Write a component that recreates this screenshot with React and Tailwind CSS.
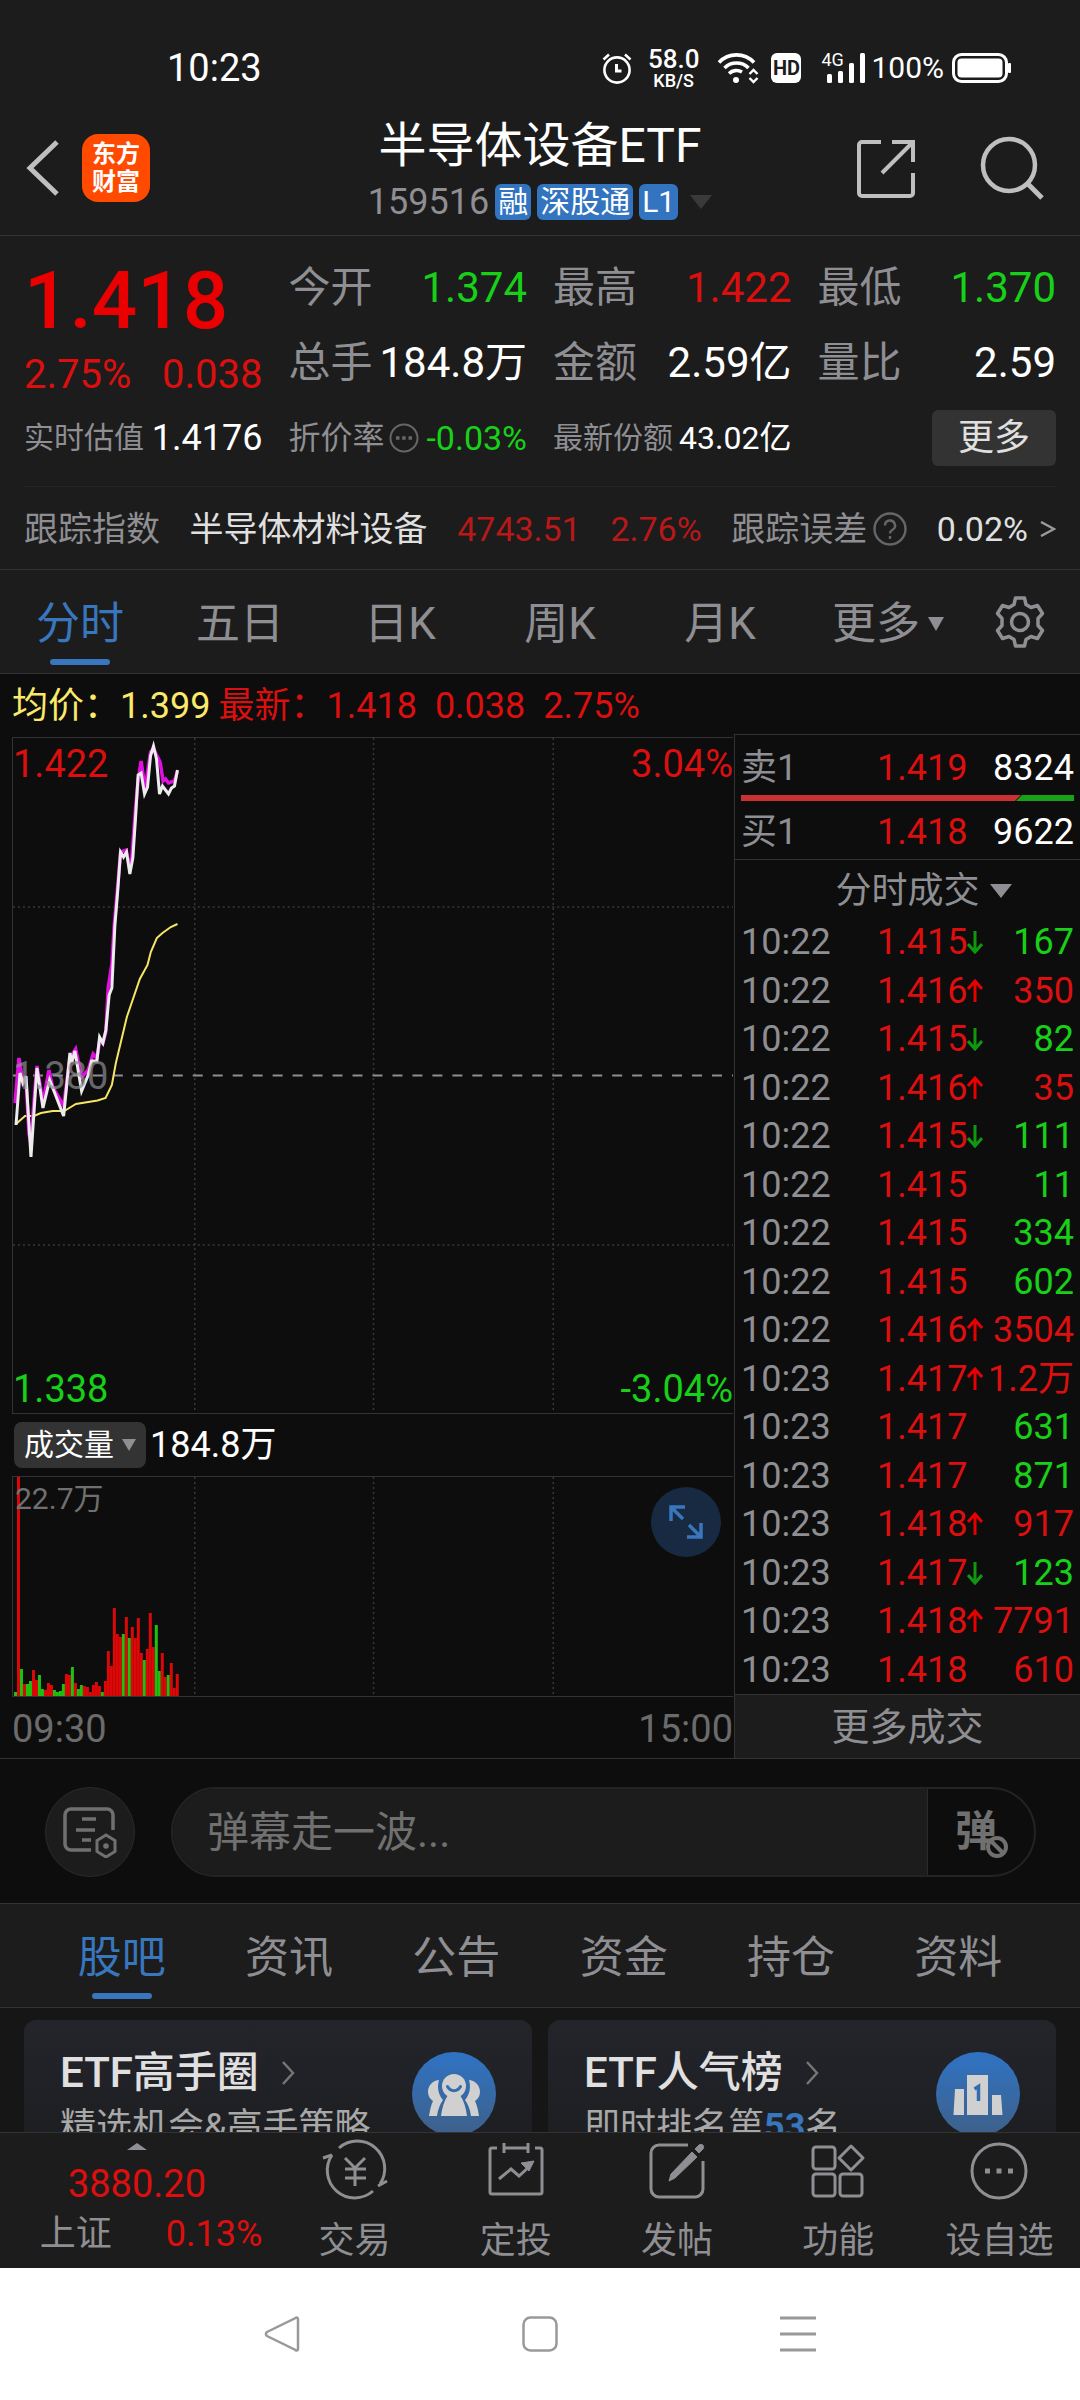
import { useState } from "react";

const RED = "text-[#dc0f0f]";
const GREEN = "text-[#17d017]";

const quotes = [
  { label: "今开", value: "1.374", color: GREEN },
  { label: "最高", value: "1.422", color: RED },
  { label: "最低", value: "1.370", color: GREEN },
  { label: "总手", value: "184.8万", color: "text-white" },
  { label: "金额", value: "2.59亿", color: "text-white" },
  { label: "量比", value: "2.59", color: "text-white" },
];

const trades = [
  ["10:22", "1.415", "down", "167", GREEN],
  ["10:22", "1.416", "up", "350", RED],
  ["10:22", "1.415", "down", "82", GREEN],
  ["10:22", "1.416", "up", "35", RED],
  ["10:22", "1.415", "down", "111", GREEN],
  ["10:22", "1.415", "", "11", GREEN],
  ["10:22", "1.415", "", "334", GREEN],
  ["10:22", "1.415", "", "602", GREEN],
  ["10:22", "1.416", "up", "3504", RED],
  ["10:23", "1.417", "up", "1.2万", RED],
  ["10:23", "1.417", "", "631", GREEN],
  ["10:23", "1.417", "", "871", GREEN],
  ["10:23", "1.418", "up", "917", RED],
  ["10:23", "1.417", "down", "123", GREEN],
  ["10:23", "1.418", "up", "7791", RED],
  ["10:23", "1.418", "", "610", RED],
];

const priceLine =
  "3,387 7,335 10,345 13,338 18,419 24,330 30,370 36.7,342 50.7,378 57,315 59,324 62,313 68.7,353 75.3,337 78.7,323 84,323 86.7,299 90,305 93,292 96.3,257 99,250 102,188 104.7,155 107.7,114 110.7,119 113.7,114 117,136 120,120 122.7,80 125.3,37 128.3,35 131.7,56 134.7,49 137.7,18 140.7,8 143.7,21 146.7,56 149.7,48 152.7,52 155.7,56 158.7,50 161.7,48 164.7,32";

const iopvLine =
  "2,365 6,320 10,345 13,342 16,396 18,405 21,363 24,328 30,365 36,332 39.7,349 50.7,368 57,320 62.7,311 68.7,339 75.3,332 80.3,316 84,320 86.7,304 90,305 93,294 95.3,250 99,226 101.3,188 104.7,150 107.7,114 113.3,112 116.3,127 119,120 122.7,70 125.3,42 128.3,23 132.3,51 137.7,14 140.7,11 147.3,24 150.3,43 152.7,41 155.7,45 161.7,43 164.7,33";

const avgLine =
  "3,386 12,378 21,378 28,375 39.7,373 51.3,373 56.3,370 63,366 84.7,362.5 92.7,360 99,347 103,325 114,279 127,241 134.7,227 138,214 144,200 149.7,195 158,189 164.7,186";

// one bar per minute: [height, rising]
const volumes = [
  [4, 0], [220, 1], [27, 0], [12, 1], [12, 0], [15, 0], [26, 1], [16, 1], [21, 0], [7, 0], [6, 1],
  [13, 1], [11, 1], [6, 0], [4, 0], [5, 0], [12, 0], [22, 1], [21, 1], [29, 0], [13, 1], [7, 0],
  [11, 0], [10, 1], [9, 1], [4, 1], [11, 1], [14, 1], [10, 1], [4, 0], [15, 1], [45, 1], [30, 1],
  [88, 1], [62, 1], [59, 1], [62, 0], [79, 1], [58, 0], [69, 1], [58, 1], [78, 1], [43, 1], [36, 0],
  [47, 1], [83, 1], [49, 1], [71, 0], [25, 0], [43, 1], [19, 1], [21, 0], [33, 1], [8, 1], [22, 1],
];

const Triangle = ({ className }) => (
  <svg viewBox="0 0 20 14" className={className} fill="currentColor" preserveAspectRatio="none">
    <path d="M0 0h20L10 14z" />
  </svg>
);

const TickArrow = ({ dir }) => (
  <svg
    viewBox="0 0 16 24"
    className={`h-6 w-4 ${dir === "up" ? "text-[#e60000]" : "rotate-180 text-[#0f980f]"}`}
    fill="none"
    stroke="currentColor"
    strokeWidth="3"
  >
    <path d="M8 23V3M1 10l7-8 7 8" />
  </svg>
);

const StatusBar = () => (
  <div className="flex h-30 items-center justify-between pt-4 pr-[68px] pl-[167px] text-white">
    <span className="text-[38px] leading-10">10:23</span>
    <div className="flex items-center">
      <svg viewBox="0 0 30 32" className="mr-4 h-8 w-[30px]" fill="none" stroke="currentColor" strokeWidth="2.6">
        <circle cx="15" cy="18" r="12.6" />
        <path d="M14.5 12v7h5" strokeWidth="3" />
        <path d="M1.5 7.500L7 2.500M28.500 7.500L23 2.500" />
      </svg>
      <div className="mr-[18px] flex flex-col items-center font-medium">
        <span className="text-[26px] leading-[26px]">58.0</span>
        <span className="text-lg leading-[18px]">KB/S</span>
      </div>
      <svg viewBox="0 0 42 32" className="mr-3 h-8 w-[42px]" fill="none" stroke="currentColor" strokeWidth="3.6">
        <path d="M2 10.500a24 24 0 0 1 35 0" />
        <path d="M7.500 16a17 17 0 0 1 24 0" />
        <path d="M12 21.500a11 11 0 0 1 13-1.500" />
        <circle cx="19" cy="28" r="3" fill="currentColor" stroke="none" />
        <path d="M32.500 22l4-4 4 4M32.500 26l4 4 4-4" strokeWidth="2.400" />
      </svg>
      <span className="mr-5 flex h-[30px] w-[30px] items-center justify-center rounded-md bg-white text-xl leading-none font-bold text-[#1c1c1c]">
        HD
      </span>
      <div className="relative mr-1 h-8 w-[46px]">
        <span className="absolute top-0 left-0 text-lg leading-4">4G</span>
        <svg viewBox="0 0 46 32" className="h-8 w-[46px]" fill="currentColor">
          <rect x="6" y="22" width="5" height="9" rx="1.500" />
          <rect x="17" y="19" width="5" height="12" rx="1.500" />
          <rect x="28" y="11" width="5" height="20" rx="1.500" />
          <rect x="39" y="1" width="5" height="30" rx="1.500" />
        </svg>
      </div>
      <span className="mr-2 text-3xl leading-8">100%</span>
      <svg viewBox="0 0 60 32" className="h-8 w-[60px]">
        <rect x="1.500" y="2.500" width="53" height="27" rx="8" fill="none" stroke="white" strokeWidth="3" />
        <rect x="5.500" y="6.500" width="45" height="19" rx="4" fill="white" />
        <rect x="56" y="11" width="3" height="10" rx="1" fill="white" />
      </svg>
    </div>
  </div>
);

const Header = () => (
  <header className="flex h-[116px] items-start justify-between border-b border-[#333] px-6">
    <div className="flex w-60 items-center gap-[22px] pt-3.5">
      <button aria-label="返回">
        <svg viewBox="0 0 36 56" className="h-14 w-9" fill="none" stroke="#bfbfbf" strokeWidth="5">
          <path d="M33 2L6 28l27 26" />
        </svg>
      </button>
      <div className="flex h-[68px] w-[68px] flex-col items-center justify-center rounded-2xl bg-[#ff4a00] text-2xl leading-7 font-bold text-white">
        <span>东方</span>
        <span>财富</span>
      </div>
    </div>
    <div className="flex flex-col items-center">
      <h1 className="text-5xl leading-[52px] text-white">半导体设备ETF</h1>
      <div className="mt-2.5 flex items-center gap-1.5 text-3xl leading-9 text-white">
        <span className="text-4xl text-[#8e8e93]">159516</span>
        <span className="rounded-md bg-[#3274c0] px-[3px]">融</span>
        <span className="rounded-md bg-[#3274c0] px-[3px]">深股通</span>
        <span className="rounded-md bg-[#3274c0] px-[3px]">L1</span>
        <Triangle className="ml-1.5 h-3.5 w-[22px] text-[#3a3a3a]" />
      </div>
    </div>
    <div className="flex w-60 items-center justify-end gap-16 pt-4 pr-3">
      <button aria-label="分享">
        <svg viewBox="0 0 60 60" className="h-[60px] w-[60px]" fill="none" stroke="#bfbfbf" strokeWidth="4">
          <path d="M25 4H6a3 3 0 0 0-3 3v48a3 3 0 0 0 3 3h48a3 3 0 0 0 3-3V35" />
          <path d="M36 4h21v20M56 5L26 35" />
        </svg>
      </button>
      <button aria-label="搜索">
        <svg viewBox="0 0 64 64" className="h-16 w-16" fill="none" stroke="#bfbfbf" strokeWidth="4.500">
          <circle cx="29" cy="29" r="26" />
          <path d="M47 47l15 15" strokeWidth="5" />
        </svg>
      </button>
    </div>
  </header>
);

const QuotePanel = () => (
  <section className="border-b border-[#333] px-6 pt-3.5 pb-3.5 text-[#8e8e93]">
    <div className="grid grid-cols-4 gap-x-[26px]">
      <div className="flex flex-col pt-3 whitespace-nowrap">
        <span className="text-[80px] leading-[78px] font-medium text-[#ea0000]">1.418</span>
        <div className={`flex justify-between text-[40px] leading-[70px] ${RED}`}>
          <span>2.75%</span>
          <span>0.038</span>
        </div>
      </div>
      <dl className="col-span-3 grid grid-cols-3 content-start gap-x-[26px]">
        {quotes.map((q) => (
          <div key={q.label} className="flex h-[75px] items-center justify-between text-[42px] leading-none whitespace-nowrap">
            <dt>{q.label}</dt>
            <dd className={q.color}>{q.value}</dd>
          </div>
        ))}
      </dl>
    </div>
    <div className="grid grid-cols-4 items-center gap-x-[26px] whitespace-nowrap">
      <div className="flex items-center justify-between text-3xl">
        <span>实时估值</span>
        <span className="text-4xl text-white">1.4176</span>
      </div>
      <div className="flex items-center justify-between text-[32px]">
        <span className="flex items-center gap-1">
          折价率
          <svg viewBox="0 0 30 30" className="h-[30px] w-[30px]" fill="none" stroke="#666" strokeWidth="2">
            <circle cx="15" cy="15" r="13.500" />
            <path d="M7 15h3.500M13.200 15h3.500M19.500 15H23" strokeWidth="3.500" />
          </svg>
        </span>
        <span className={`text-[34px] ${GREEN}`}>-0.03%</span>
      </div>
      <div className="flex items-center justify-between text-3xl">
        <span>最新份额</span>
        <span className="text-[32px] text-white">43.02亿</span>
      </div>
      <button className="h-14 justify-self-end rounded-md bg-[#333] px-[26px] text-4xl leading-none text-[#e0e0e0]">更多</button>
    </div>
    <div className="mt-5 flex items-center justify-between border-t border-[#262626] pt-4 text-[34px] leading-[52px] whitespace-nowrap">
      <span>跟踪指数</span>
      <span className="text-[#e0e0e0]">半导体材料设备</span>
      <span className="text-[#b81818]">4743.51</span>
      <span className="text-[#b81818]">2.76%</span>
      <span className="flex items-center gap-1.5">
        跟踪误差
        <svg viewBox="0 0 34 34" className="h-[34px] w-[34px]" fill="none" stroke="#666" strokeWidth="2.400">
          <circle cx="17" cy="17" r="15.500" />
          <path d="M12 13.500a5 5 0 1 1 7.500 4.300c-1.700 1-2.500 1.700-2.500 3.700M17 24v3" />
        </svg>
      </span>
      <a href="#tracking" className="flex items-center gap-3 text-[#e0e0e0]">
        <span>0.02%</span>
        <svg viewBox="0 0 16 16" className="h-4 w-4" fill="none" stroke="#999" strokeWidth="2.500">
          <path d="M1 1l13 7-13 7" />
        </svg>
      </a>
    </div>
  </section>
);

const PeriodTabs = () => {
  const [active, setActive] = useState("分时");

  return (
    <nav className="flex h-[104px] items-stretch border-b border-[#333] text-[44px] text-[#8e8e93]">
      {["分时", "五日", "日K", "周K", "月K"].map((tab) => (
        <button
          key={tab}
          onClick={() => setActive(tab)}
          className={`relative flex-1 pt-1 leading-none ${active === tab ? "text-[#3876bd]" : ""}`}
        >
          {tab}
          {active === tab && (
            <span className="absolute bottom-2 left-1/2 h-1.5 w-[60px] -translate-x-1/2 rounded-full bg-[#3876bd]" />
          )}
        </button>
      ))}
      <button className="flex-1 pt-1 leading-none">
        <span className="flex items-center justify-end gap-2 pr-4">
          更多
          <Triangle className="h-3.5 w-4" />
        </span>
      </button>
      <button aria-label="设置" className="flex w-30 items-center justify-center">
        <svg viewBox="0 0 52 52" className="h-[52px] w-[52px]" fill="none" stroke="currentColor" strokeWidth="3.500">
          <path d="M21.500 2h9l1.500 6.500 5 3 6.500-2 5 8-4.500 5v7l4.500 5-5 8-6.500-2-5 3L30.500 50h-9L20 43.500l-5-3-6.500 2-5-8 4.500-5v-7l-4.500-5 5-8 6.500 2 5-3z" strokeLinejoin="round" />
          <circle cx="26" cy="26" r="8.500" />
        </svg>
      </button>
    </nav>
  );
};

const PriceChart = () => (
  <div className="relative h-[677px] border-y border-l border-[#333] text-[38px] leading-10">
    <svg viewBox="0 0 721 675" preserveAspectRatio="none" className="h-full w-full" fill="none">
      <g stroke="#383838" strokeWidth="1.500" strokeDasharray="2 3">
        <path d="M0 169h721M0 507h721" />
        <path d="M182 0v675M361 0v675M541 0v675" />
      </g>
      <path d="M0 337.500h721" stroke="#8e8e93" strokeWidth="2" strokeDasharray="10 10" />
      <polyline points={avgLine} stroke="#f5e663" strokeWidth="2" />
      <polyline points={iopvLine} stroke="#e010e0" strokeWidth="3.500" />
      <polyline points={priceLine} stroke="#ececec" strokeWidth="3" />
    </svg>
    <span className={`absolute top-1.5 left-0 ${RED}`}>1.422</span>
    <span className={`absolute top-1.5 right-0 ${RED}`}>3.04%</span>
    <span className="absolute top-1/2 left-0 -translate-y-1/2 text-[#8e8e93] opacity-70">1.380</span>
    <span className={`absolute bottom-1 left-0 ${GREEN}`}>1.338</span>
    <span className={`absolute right-0 bottom-1 ${GREEN}`}>-3.04%</span>
  </div>
);

const VolumeChart = () => (
  <div className="relative h-[221px] border-y border-l border-[#333]">
    <svg viewBox="0 0 721 219" preserveAspectRatio="none" className="h-full w-full" fill="none">
      <path
        d="M182 0v219M361 0v219M541 0v219"
        stroke="#383838"
        strokeWidth="1.500"
        strokeDasharray="2 3"
      />
      {volumes.map(([height, rising], i) => (
        <rect key={i} x={i * 3 + 1} y={219 - height} width="3" height={height} fill={rising ? "#dc0808" : "#1fc010"} />
      ))}
    </svg>
    <span className="absolute top-1 left-0.5 text-3xl text-[#707070]">22.7万</span>
    <button
      aria-label="全屏"
      className="absolute top-2.5 right-3 flex h-[70px] w-[70px] items-center justify-center rounded-full bg-[#172a41]"
    >
      <svg viewBox="0 0 36 36" className="h-9 w-9" fill="none" stroke="#3876bd" strokeWidth="3.500">
        <path d="M17 3H3v14M3 3l12 12M33 19v14H19M33 33L21 21" />
      </svg>
    </button>
  </div>
);

const OrderBook = () => (
  <aside className="flex w-[346px] shrink-0 flex-col border-t border-l border-[#333] text-4xl text-[#8e8e93]">
    <div className="border-b border-[#333] px-1.5 pt-1.5 leading-[54px]">
      <div className="flex">
        <span className="w-[136px]">卖1</span>
        <span className={RED}>1.419</span>
        <span className="ml-auto text-white">8324</span>
      </div>
      <svg viewBox="0 0 333 6" preserveAspectRatio="none" className="mb-1 block h-1.5 w-full">
        <path d="M0 0h280l-6 6H0z" fill="#c83232" />
        <path d="M281 0h52v6h-58z" fill="#18a018" />
      </svg>
      <div className="flex">
        <span className="w-[136px]">买1</span>
        <span className={RED}>1.418</span>
        <span className="ml-auto text-white">9622</span>
      </div>
    </div>
    <button className="flex h-[58px] items-center justify-center gap-2.5 pt-1 pl-8 leading-none">
      分时成交
      <Triangle className="h-3.5 w-[22px]" />
    </button>
    <table className="h-[776px] w-full table-fixed">
      <tbody>
        {trades.map(([time, price, dir, volume, color], i) => (
          <tr key={i} className="leading-10">
            <td className="w-[136px] pl-1.5">{time}</td>
            <td className={`w-[114px] ${RED}`}>
              <span className="flex items-center pl-1.5">
                {price}
                {dir && <TickArrow dir={dir} />}
              </span>
            </td>
            <td className={`pr-1.5 text-right whitespace-nowrap ${color}`}>{volume}</td>
          </tr>
        ))}
      </tbody>
    </table>
    <button className="flex-1 border-t border-[#333] bg-[#1c1c1c] text-[38px] leading-none">更多成交</button>
  </aside>
);

const ChartSection = () => (
  <section className="border-b border-[#333] bg-[#0d0d0d]">
    <div className={`flex h-[60px] items-center gap-[18px] pt-1 pl-3 text-4xl whitespace-nowrap ${RED}`}>
      <span>
        <span className="mr-2 text-[#fbe96a]">均价：1.399</span>
        最新：1.418
      </span>
      <span>0.038</span>
      <span>2.75%</span>
    </div>
    <div className="flex">
      <div className="flex min-w-0 flex-1 flex-col pt-[3px] pr-px pl-3">
        <PriceChart />
        <div className="flex h-[62px] items-center gap-1 pl-0.5 text-4xl text-white">
          <button className="flex h-[46px] items-center gap-2 rounded-lg bg-[#333] px-2.5 text-3xl leading-none">
            成交量
            <Triangle className="h-3 w-3.5 text-[#8e8e93]" />
          </button>
          <span>184.8万</span>
        </div>
        <VolumeChart />
        <div className="flex h-[61px] items-center justify-between pt-1 text-[38px] text-[#6b6b6b]">
          <span>09:30</span>
          <span>15:00</span>
        </div>
      </div>
      <OrderBook />
    </div>
  </section>
);

const CommentBar = () => (
  <div className="flex items-center gap-9 border-b border-[#333] bg-[#0d0d0d] pt-7 pr-11 pb-[26px] pl-[45px]">
    <button aria-label="弹幕设置" className="flex h-[90px] w-[90px] shrink-0 items-center justify-center rounded-full border border-[#2a2a2a] bg-[#1c1c1c]">
      <svg viewBox="0 0 56 52" className="h-[52px] w-14" fill="none" stroke="#707070" strokeWidth="3.500">
        <path d="M51 24V9a6 6 0 0 0-6-6H9a6 6 0 0 0-6 6v29a6 6 0 0 0 6 6h20" />
        <path d="M20 13h14M14 24h19M20 34h9" />
        <path d="M44 29l9 5.500v11L44 51l-9-5.500v-11z" strokeWidth="3" />
        <circle cx="44" cy="40" r="2.800" fill="#707070" stroke="none" />
      </svg>
    </button>
    <div className="flex h-[90px] flex-1 overflow-hidden rounded-full border-2 border-[#232323]">
      <input
        aria-label="弹幕"
        placeholder="弹幕走一波..."
        className="min-w-0 flex-1 border-r border-[#2a2a2a] bg-[#1c1c1c] pl-[34px] text-[42px] outline-none placeholder:text-[#707070]"
      />
      <button aria-label="关闭弹幕" className="relative w-[106px] pr-2.5 text-[42px] leading-none font-bold text-[#707070]">
        弹
        <svg viewBox="0 0 24 24" className="absolute right-[25px] bottom-4 h-6 w-6" fill="#0d0d0d" stroke="#707070" strokeWidth="4">
          <circle cx="12" cy="12" r="9" />
          <path d="M6 6l12 12" />
        </svg>
      </button>
    </div>
  </div>
);

const InfoTabs = () => {
  const [active, setActive] = useState("股吧");

  return (
    <nav className="flex h-26 border-b border-[#333] px-[38px] text-[44px] text-[#8e8e93]">
      {["股吧", "资讯", "公告", "资金", "持仓", "资料"].map((tab) => (
        <button
          key={tab}
          onClick={() => setActive(tab)}
          className={`relative flex-1 pt-1 leading-none ${active === tab ? "text-[#3876bd]" : ""}`}
        >
          {tab}
          {active === tab && (
            <span className="absolute bottom-2 left-1/2 h-1.5 w-[60px] -translate-x-1/2 rounded-full bg-[#3876bd]" />
          )}
        </button>
      ))}
    </nav>
  );
};

const Card = ({ title, text, children }) => (
  <a
    href="#card"
    className="flex h-36 flex-1 justify-between rounded-xl bg-linear-to-b from-[#24252b] to-[#1c1d20] pr-9 pl-9 whitespace-nowrap"
  >
    <div className="pt-6">
      <div className="flex items-center gap-[22px] text-[42px] leading-[58px] font-medium text-[#e0e0e0]">
        {title}
        <svg viewBox="0 0 14 24" className="h-6 w-3.5" fill="none" stroke="#777" strokeWidth="2.400">
          <path d="M2 1l10 11L2 23" />
        </svg>
      </div>
      <p className="text-4xl leading-[50px] text-[#a8a8a8]">{text}</p>
    </div>
    <svg viewBox="0 0 84 84" className="mt-8 h-[84px] w-[84px]">
      <defs>
        <linearGradient id="badge" x2="0" y2="1">
          <stop offset="0" stopColor="#2f73c4" />
          <stop offset="1" stopColor="#3e6089" />
        </linearGradient>
      </defs>
      <circle cx="42" cy="42" r="42" fill="url(#badge)" />
      {children}
    </svg>
  </a>
);

const Cards = () => (
  <section className="flex h-[124px] gap-4 overflow-hidden bg-[#161616] px-6 pt-3">
    <Card title="ETF高手圈" text="精选机会&高手策略">
      <g fill="#d0d0d0">
        <path d="M27 28c-8 1-11 7-11 12 0 4 2 7 5 9-2 4-3 9-4 15h8c1-7 3-12 6-16-5-6-6-13-4-20z" />
        <path d="M57 28c8 1 11 7 11 12 0 4-2 7-5 9 2 4 3 9 4 15h-8c-1-7-3-12-6-16 5-6 6-13 4-20z" />
        <circle cx="42" cy="34" r="12" />
        <path d="M36 43h12c4 6 6 13 7 21H29c1-8 3-15 7-21z" />
      </g>
      <path d="M35.500 34.500c3 5.500 10 5.500 13 0" fill="none" stroke="#346cb0" strokeWidth="3" strokeLinecap="round" />
    </Card>
    <Card
      title="ETF人气榜"
      text={
        <>
          即时排名第<b className="font-bold text-[#3876bd]">53</b>名
        </>
      }
    >
      <g fill="#d0d0d0">
        <path d="M19 37h9v26H17.500zM31 23h21v40H31zM56 43h9l1.500 20H56z" />
      </g>
      <path d="M38.500 37l4-2.500V49" fill="none" stroke="#346cb0" strokeWidth="3.500" />
    </Card>
  </section>
);

const navItems = [
  {
    label: "交易",
    icon: (
      <>
        <path d="M15 7a27.500 27.500 0 0 1 41 36M49 50A27.500 27.500 0 0 1 8 14" />
        <path d="M54 45l9-5M-1 17l9-3" />
        <path d="M21 17l10 10 10-10M31 27v18M21 28h21M21 37h21" />
      </>
    ),
  },
  {
    label: "定投",
    icon: (
      <>
        <path d="M12 7H7a2 2 0 0 0-2 2v42a2 2 0 0 0 2 2h48a2 2 0 0 0 2-2V9a2 2 0 0 0-2-2h-5" />
        <path d="M19 7h24M19 2v10M43 2v10M14 38l12-10 8 7 11-10" />
        <path d="M36 22l13-2-5 10z" fill="currentColor" strokeWidth="1" />
      </>
    ),
  },
  {
    label: "发帖",
    icon: (
      <>
        <path d="M42 4H13a8 8 0 0 0-8 8v36a8 8 0 0 0 8 8h36a8 8 0 0 0 8-8V20" />
        <path d="M46 11l5 5-22 21-6 3 2-7zM49 8l4-4c3-2 6 1 4 4l-4 4z" fill="currentColor" strokeWidth="1" />
      </>
    ),
  },
  {
    label: "功能",
    icon: (
      <>
        <rect x="6" y="6" width="22" height="22" rx="3" />
        <rect x="6" y="33" width="22" height="22" rx="3" />
        <rect x="33" y="33" width="22" height="22" rx="3" />
        <path d="M44 5l12 12-12 12-12-12z" strokeLinejoin="round" />
      </>
    ),
  },
  {
    label: "设自选",
    icon: (
      <>
        <circle cx="31" cy="30" r="27" />
        <path d="M17 30h5M28.500 30h5M40 30h5" strokeWidth="5" />
      </>
    ),
  },
];

const BottomNav = () => (
  <nav className="flex h-[136px] border-t border-[#333] text-4xl leading-none text-[#8e8e93]">
    <a href="#index" className="flex w-[274px] flex-col items-center pt-2.5">
      <Triangle className="h-[7px] w-5 rotate-180" />
      <span className={`mt-3 text-[38px] leading-11 ${RED}`}>3880.20</span>
      <span className="mt-1 flex gap-[54px] pl-7 leading-12">
        上证
        <span className={RED}>0.13%</span>
      </span>
    </a>
    {navItems.map(({ label, icon }) => (
      <a key={label} href="#nav" className="flex flex-1 flex-col items-center gap-[18px] pt-2">
        <svg
          viewBox="0 0 62 60"
          className="h-[60px] w-[62px] overflow-visible"
          fill="none"
          stroke="currentColor"
          strokeWidth="3"
        >
          {icon}
        </svg>
        <span className="leading-[44px]">{label}</span>
      </a>
    ))}
  </nav>
);

const SystemNav = () => (
  <div className="flex h-33 items-center justify-center gap-[222px] bg-white">
    <button aria-label="后退">
      <svg viewBox="0 0 36 36" className="h-9 w-9" fill="none" stroke="#999" strokeWidth="2.500">
        <path d="M34 3v30c0 1.500-1.500 2-2.500 1L3 20c-1.500-1-1.500-3 0-4L31.500 2C32.500 1 34 1.500 34 3z" />
      </svg>
    </button>
    <button aria-label="主页">
      <svg viewBox="0 0 36 36" className="h-9 w-9" fill="none" stroke="#999" strokeWidth="2.500">
        <rect x="1.500" y="1.500" width="33" height="33" rx="7" />
      </svg>
    </button>
    <button aria-label="最近任务">
      <svg viewBox="0 0 36 36" className="h-9 w-9" fill="none" stroke="#999" strokeWidth="3">
        <path d="M0 2h36M0 18h36M0 34h36" />
      </svg>
    </button>
  </div>
);

export default function App() {
  return (
    <main className="min-h-screen bg-[#1c1c1c] font-['Roboto','Noto_Sans_CJK_SC',sans-serif]">
      <StatusBar />
      <Header />
      <QuotePanel />
      <PeriodTabs />
      <ChartSection />
      <CommentBar />
      <InfoTabs />
      <Cards />
      <BottomNav />
      <SystemNav />
    </main>
  );
}
